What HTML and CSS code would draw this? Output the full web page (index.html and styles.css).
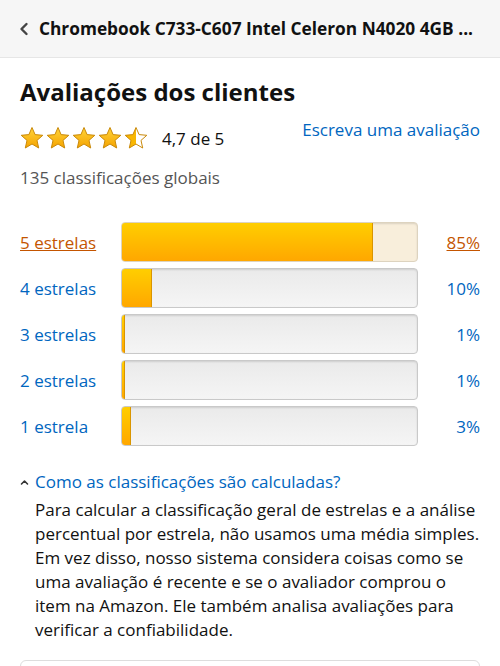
FILE: index.html
```html
<!DOCTYPE html>
<html lang="pt-BR">

<head>
    <meta charset="UTF-8">
    <meta name="viewport" content="width=device-width, initial-scale=1.0">
    <title>Avaliações dos clientes</title>
    <link rel="stylesheet" href="styles.css">
</head>

<body>
    <header class="topbar">
        <svg class="back" width="10" height="14" viewBox="0 0 10 14">
            <path d="M7.5 2 L2.5 7 L7.5 12" fill="none" stroke="#444" stroke-width="2.4" stroke-linecap="round" stroke-linejoin="round" />
        </svg>
        <span class="product">Chromebook C733-C607 Intel Celeron N4020 4GB ...</span>
    </header>

    <main class="reviews">
        <h2>Avaliações dos clientes</h2>

        <div class="summary">
            <div class="stars">
                <svg width="132" height="26" viewBox="0 0 132 26">
                    <defs>
                        <linearGradient id="gold" x1="0" y1="0" x2="0" y2="1">
                            <stop offset="0" stop-color="#ffd43a" />
                            <stop offset="1" stop-color="#f5a300" />
                        </linearGradient>
                        <linearGradient id="half" x1="0" y1="0" x2="1" y2="0">
                            <stop offset="0.5" stop-color="#f9b700" />
                            <stop offset="0.5" stop-color="#fff" />
                        </linearGradient>
                        <path id="star" d="M12 1.5 L15.1 8.6 L22.8 9.3 L17 14.4 L18.7 22 L12 18 L5.3 22 L7 14.4 L1.2 9.3 L8.9 8.6 Z" />
                    </defs>
                    <use href="#star" x="0" y="1" fill="url(#gold)" stroke="#c9890a" stroke-width="1" />
                    <use href="#star" x="26" y="1" fill="url(#gold)" stroke="#c9890a" stroke-width="1" />
                    <use href="#star" x="52" y="1" fill="url(#gold)" stroke="#c9890a" stroke-width="1" />
                    <use href="#star" x="78" y="1" fill="url(#gold)" stroke="#c9890a" stroke-width="1" />
                    <use href="#star" x="104" y="1" fill="url(#half)" stroke="#c9890a" stroke-width="1" />
                </svg>
                <span class="score">4,7 de 5</span>
            </div>
            <a class="link write" href="#">Escreva uma avaliação</a>
        </div>

        <p class="total">135 classificações globais</p>

        <table class="histogram">
            <tr class="active">
                <td class="label"><a href="#">5 estrelas </a></td>
                <td class="meter"><div class="bar"><div class="fill" style="width: 85%"></div></div></td>
                <td class="pct"><a href="#">85%</a></td>
            </tr>
            <tr>
                <td class="label"><a href="#">4 estrelas</a></td>
                <td class="meter"><div class="bar"><div class="fill" style="width: 10%"></div></div></td>
                <td class="pct"><a href="#">10%</a></td>
            </tr>
            <tr>
                <td class="label"><a href="#">3 estrelas</a></td>
                <td class="meter"><div class="bar"><div class="fill" style="width: 1%"></div></div></td>
                <td class="pct"><a href="#">1%</a></td>
            </tr>
            <tr>
                <td class="label"><a href="#">2 estrelas</a></td>
                <td class="meter"><div class="bar"><div class="fill" style="width: 1%"></div></div></td>
                <td class="pct"><a href="#">1%</a></td>
            </tr>
            <tr>
                <td class="label"><a href="#">1 estrela</a></td>
                <td class="meter"><div class="bar"><div class="fill" style="width: 3%"></div></div></td>
                <td class="pct"><a href="#">3%</a></td>
            </tr>
        </table>

        <div class="how">
            <a class="link toggle" href="#">
                <svg width="9" height="7" viewBox="0 0 9 7">
                    <path d="M1.5 5 L4.5 2 L7.5 5" fill="none" stroke="#333" stroke-width="1.6" stroke-linecap="round" stroke-linejoin="round" />
                </svg>
                Como as classificações são calculadas?
            </a>
            <p class="explain">Para calcular a classificação geral de estrelas e a análise percentual por estrela, não usamos uma média simples. Em vez disso, nosso sistema considera coisas como se uma avaliação é recente e se o avaliador comprou o item na Amazon. Ele também analisa avaliações para verificar a confiabilidade.</p>
        </div>

        <div class="next-box"></div>
    </main>
</body>

</html>
```

FILE: styles.css
```css
body {
    margin: 0;
    font-family: "Open Sans", "Noto Sans", Arial, sans-serif;
    color: #111;
    background: #fff;
}

a {
    text-decoration: none;
}

.topbar {
    height: 58px;
    background: #f6f6f6;
    border-bottom: 1px solid #e6e6e6;
    display: flex;
    align-items: center;
    gap: 10px;
    padding: 0 0 0 19px;
    box-sizing: border-box;
}

.product {
    font-size: 17.3px;
    font-weight: 700;
    color: #111;
    white-space: nowrap;
}

.reviews {
    padding: 0 20px;
}

.reviews h2 {
    margin: 0;
    padding-top: 18px;
    font-size: 24px;
    font-weight: 700;
    line-height: 32px;
}

.summary {
    display: flex;
    justify-content: space-between;
    align-items: flex-start;
    margin-top: 16px;
}

.stars {
    display: flex;
    align-items: center;
    gap: 10px;
}

.stars svg {
    display: block;
}

.score {
    font-size: 17px;
    line-height: 26px;
    padding-top: 2px;
}

.link {
    color: #0066c0;
}

.write {
    font-size: 17px;
    line-height: 22px;
    margin-top: -5px;
}

.total {
    margin: 14px 0 0;
    font-size: 17px;
    line-height: 24px;
    color: #555;
}

.histogram {
    width: 100%;
    border-collapse: separate;
    border-spacing: 0 6px;
    margin-top: 26px;
}

.histogram td {
    padding: 0;
    height: 40px;
    font-size: 17px;
}

.label {
    width: 101px;
}

.label a,
.pct a {
    color: #0066c0;
}

.active .label a,
.active .pct a {
    color: #c45500;
    text-decoration: underline;
}

.pct {
    width: 62px;
    text-align: right;
}

.bar {
    height: 38px;
    border: 1px solid #c9c9c9;
    border-radius: 4px;
    background: linear-gradient(#eaeaea, #f5f5f5);
    box-shadow: inset 0 1px 2px rgba(0, 0, 0, 0.12);
    overflow: hidden;
}

.active .bar {
    background: #f8eedb;
    border-color: #ddd3bf;
}

.fill {
    height: 100%;
    min-width: 2px;
    box-sizing: border-box;
    background: linear-gradient(#ffce00, #ffa700);
    border-right: 1px solid #d99500;
}

.how {
    margin-top: 19px;
}

.toggle {
    display: flex;
    align-items: center;
    gap: 6px;
    font-size: 17px;
    line-height: 22px;
}

.explain {
    margin: 5px 0 0 15px;
    font-size: 17px;
    line-height: 24px;
    color: #111;
}

.next-box {
    margin-top: 18px;
    height: 20px;
    border: 1px solid #ddd;
    border-radius: 6px;
}
```
